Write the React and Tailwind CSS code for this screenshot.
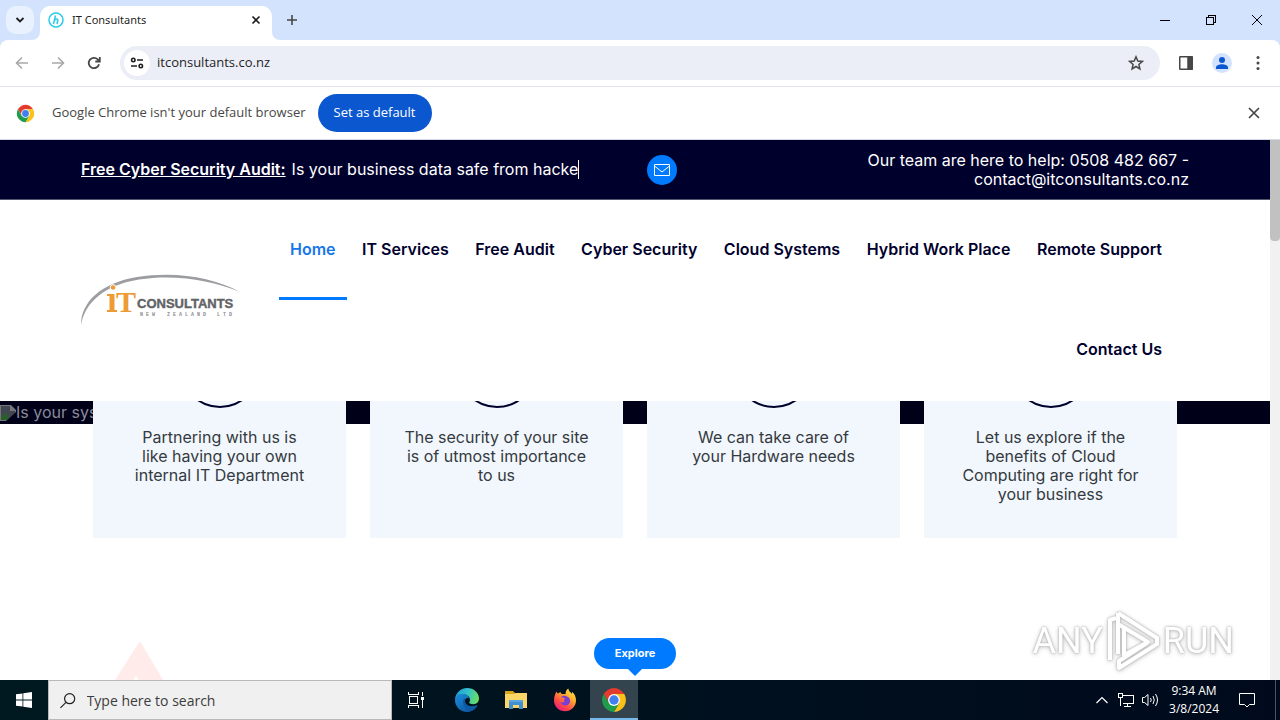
import React from "react";

const NAV = ["Home", "IT Services", "Free Audit", "Cyber Security", "Cloud Systems", "Hybrid Work Place", "Remote Support", "Contact Us"];

const CARDS = [
  ["Partnering with us is", "like having your own", "internal IT Department"],
  ["The security of your site", "is of utmost importance", "to us"],
  ["We can take care of", "your Hardware needs"],
  ["Let us explore if the", "benefits of Cloud", "Computing are right for", "your business"],
];

function ChromeLogo({ className }) {
  return (
    <svg viewBox="0 0 48 48" className={className} aria-hidden="true">
      <path fill="#e33b2e" d="M4.95 13A22 22 0 0 1 43.05 13H24L14.47 29.5Z" />
      <path fill="#fbc116" d="M43.05 13A22 22 0 0 1 24 46L33.53 29.5L24 13Z" />
      <path fill="#1f9d4c" d="M24 46A22 22 0 0 1 4.95 13L14.47 29.5H33.53Z" />
      <circle cx="24" cy="24" r="11" fill="#fff" />
      <circle cx="24" cy="24" r="8.6" fill="#3f7fee" />
    </svg>
  );
}

function EdgeLogo() {
  return (
    <svg viewBox="0 0 24 24" className="size-6" aria-hidden="true">
      <defs>
        <linearGradient id="edgeTop" x1="0" y1="0.4" x2="1" y2="0.6">
          <stop offset="0" stopColor="#1f9fd8" />
          <stop offset="0.5" stopColor="#35c1c9" />
          <stop offset="1" stopColor="#6be05a" />
        </linearGradient>
        <linearGradient id="edgeLow" x1="0" y1="0" x2="1" y2="1">
          <stop offset="0" stopColor="#1b8fdc" />
          <stop offset="1" stopColor="#0b4a94" />
        </linearGradient>
      </defs>
      <path fill="url(#edgeLow)" d="M0 12C0 7.500 4 6 7.500 6C11 6 14 8 14 10.500C11 9 9.500 12 10 14C11 18 17 19.500 22.300 17.200C20.500 21.300 16.500 24 12 24C5.500 24 0 19 0 12Z" />
      <path fill="#0c59a4" d="M8 13C7.500 18 12 22.500 17 22.800C19.500 21.700 21.500 19.500 22.300 17.200C17 19.500 11 18 10 14C9.700 12.500 10.200 11 11.500 10.200C9.500 10 8.200 11.500 8 13Z" />
      <path fill="url(#edgeTop)" d="M0 12C0.200 5 5.500 0 12 0C19 0 24 5 24 10.500C24 14 21.500 16.200 18.500 16.200C16 16.200 14.200 15.500 14.200 14.600C14.200 14 15 13.600 15 12C15 8.500 11.500 6 7.800 6C4 6 0.500 8 0 12Z" />
    </svg>
  );
}

function FolderLogo() {
  return (
    <svg viewBox="0 0 24 24" className="size-6" aria-hidden="true">
      <path fill="#d9a520" d="M1 3H9L11 5H22V9H1Z" />
      <path fill="#fbd566" d="M1 6H10L12 5H23V20H1Z" />
      <path fill="#3f8fd2" d="M5 13H19V21H15V17H9V21H5Z" />
      <path fill="#5aa5e0" d="M5 12H19V14H5Z" />
    </svg>
  );
}

function FirefoxLogo() {
  return (
    <svg viewBox="0 0 24 24" className="size-6" aria-hidden="true">
      <defs>
        <linearGradient id="foxFire" x1="0.9" y1="0" x2="0.2" y2="1">
          <stop offset="0" stopColor="#fff04a" />
          <stop offset="0.35" stopColor="#ffb02e" />
          <stop offset="0.7" stopColor="#ff4a45" />
          <stop offset="1" stopColor="#e31587" />
        </linearGradient>
      </defs>
      <path fill="url(#foxFire)" d="M3.500 3.500C4 4.800 4.600 5.300 5.300 5.600L7.500 3.800C7.500 5 8 5.600 9 6C10.500 5.800 11.500 5.800 12.500 6.300C12.500 3.500 13.500 1.700 15.300 0.500C15.500 3 17.500 4 18.800 5.700C19.200 5 19 4.500 18.900 3.800C21.700 6 23 9 23 12.500C23 18.700 18 23.200 12 23.200C5.800 23.200 1 18.500 1 12.700C1 9 2 6 3.500 3.500Z" />
      <path fill="#7a3fd0" d="M8 9.500C9 8 11 7.300 13.500 8.300C16.500 9.300 17.500 11.500 17 14C16.300 16.800 13.500 18 11 17.300C9 16.800 7.800 15.500 7.500 14C9 14.800 10.500 14.300 11.700 13.300C10.500 12.700 10.500 11.500 12.200 10.800C11.500 9.800 9.500 9.500 8 9.500Z" />
    </svg>
  );
}

function SiteLogo() {
  return (
    <svg viewBox="0 0 160 52" className="w-40 shrink-0" role="img" aria-label="IT Consultants New Zealand Ltd">
      <path fill="#9b9da0" d="M0 51C0 28 20 9 56 3C94 -3 132 3 159 18C130 6 94 0 58 5.500C24 11 4 28 0 51Z" />
      <circle cx="32" cy="13.500" r="2.800" fill="#ee9a35" stroke="#fff" />
      <g fill="#ee9a35">
        <rect x="28.500" y="20" width="5" height="17" />
        <rect x="26" y="20" width="5" height="2" />
        <rect x="26" y="36" width="10" height="2" />
      </g>
      <text x="35" y="38" fill="#ee9a35" fontFamily="Liberation Serif, serif" fontWeight="700" fontSize="30">T</text>
      <text x="56" y="34" fill="#626366" stroke="#626366" strokeWidth="0.400" fontFamily="Liberation Sans, sans-serif" fontWeight="700" fontSize="13">CONSULTANTS</text>
      <g fill="#8a8b8e" fontFamily="Liberation Mono, monospace" fontWeight="700" fontSize="5">
        <text x="59" y="42">N E W</text>
        <text x="86" y="42">Z E A L A N D</text>
        <text x="136" y="42">L T D</text>
      </g>
    </svg>
  );
}

function BrowserChrome() {
  return (
    <div className="shrink-0 font-['Noto_Sans',sans-serif] text-[#1f1f1f]">
      <div className="flex h-10 items-end bg-[#d3e3fd]">
        <button aria-label="Search tabs" className="mb-1.5 ml-1.5 flex size-7 items-center justify-center rounded-[10px] bg-[#e9f1fe]">
          <svg viewBox="0 0 10 10" className="size-2.5" fill="none" stroke="#1f1f1f" strokeWidth="1.800"><path d="M1.500 3L5 6.500L8.500 3" /></svg>
        </button>
        <svg viewBox="0 0 8 8" className="ml-[-2px] size-2 shrink-0" fill="#fff" aria-hidden="true"><path d="M8 0V8H0A8 8 0 0 0 8 0Z" /></svg>
        <div className="flex h-[34px] w-[232px] items-center rounded-t-[10px] bg-white px-2 pb-1.5">
          <svg viewBox="0 0 16 16" className="size-4" fill="none" stroke="#2bcbe8" aria-hidden="true">
            <circle cx="8" cy="8" r="7" strokeWidth="1.500" />
            <path d="M7.500 3.500L5.500 12M6.300 8.500C8 6.500 10.300 6.500 9.800 8.500L9 12" strokeWidth="1.500" />
          </svg>
          <span className="ml-2 flex-1 text-[11px]">IT Consultants</span>
          <button aria-label="Close tab" className="flex size-4 items-center justify-center">
            <svg viewBox="0 0 10 10" className="size-2.5" stroke="#1f1f1f" strokeWidth="1.600"><path d="M1.500 1.500L8.500 8.500M8.500 1.500L1.500 8.500" /></svg>
          </button>
        </div>
        <svg viewBox="0 0 8 8" className="size-2 shrink-0" fill="#fff" aria-hidden="true"><path d="M0 0V8H8A8 8 0 0 1 0 0Z" /></svg>
        <button aria-label="New tab" className="flex h-10 w-6 items-center justify-center">
          <svg viewBox="0 0 12 12" className="size-3" stroke="#474747" strokeWidth="1.600"><path d="M6 1V11M1 6H11" /></svg>
        </button>
        <div className="ml-auto flex h-10">
          <button aria-label="Minimize" className="flex w-[46px] items-center justify-center">
            <svg viewBox="0 0 10 10" className="size-2.5" stroke="#000" shapeRendering="crispEdges"><path d="M0 5.500H10" /></svg>
          </button>
          <button aria-label="Restore" className="flex w-[46px] items-center justify-center">
            <svg viewBox="0 0 10 10" className="size-2.5" fill="none" stroke="#000" shapeRendering="crispEdges"><path d="M0.500 2.500H7.500V9.500H0.500ZM2.500 2.500V0.500H9.500V7.500H7.500" /></svg>
          </button>
          <button aria-label="Close" className="flex w-[46px] items-center justify-center">
            <svg viewBox="0 0 10 10" className="size-2.5" stroke="#000"><path d="M0 0L10 10M10 0L0 10" /></svg>
          </button>
        </div>
      </div>

      <div className="bg-[#d3e3fd]">
        <div className="flex h-[47px] items-center rounded-t-lg border-b border-[#e0e3e8] bg-white px-1">
          <button aria-label="Back" className="flex size-9 items-center justify-center">
            <svg viewBox="0 0 14 14" className="size-3.5" fill="none" stroke="#a9a9a9" strokeWidth="1.600"><path d="M13 7H2M7 1.500L1.500 7L7 12.500" /></svg>
          </button>
          <button aria-label="Forward" className="flex size-9 items-center justify-center">
            <svg viewBox="0 0 14 14" className="size-3.5" fill="none" stroke="#a9a9a9" strokeWidth="1.600"><path d="M1 7H12M7 1.500L12.500 7L7 12.500" /></svg>
          </button>
          <button aria-label="Reload" className="flex size-9 items-center justify-center">
            <svg viewBox="0 0 14 14" className="size-3.5" fill="none" stroke="#474747" strokeWidth="1.800"><path d="M12 8.200A5.200 5.200 0 1 1 10.800 3.500L12.500 5.200M12.800 1V5.500H8.300" /></svg>
          </button>
          <div className="ml-2 flex h-[34px] flex-1 items-center rounded-full bg-[#eceef7] pl-1 pr-4">
            <button aria-label="View site information" className="flex size-[26px] items-center justify-center rounded-full bg-white">
              <svg viewBox="0 0 14 12" className="h-3 w-3.5" fill="none" stroke="#1f1f1f" strokeWidth="1.600"><circle cx="3.300" cy="3" r="1.700" /><path d="M7 3H13M1 9H7" /><circle cx="10.800" cy="9" r="1.700" /></svg>
            </button>
            <input aria-label="Address" defaultValue="itconsultants.co.nz" className="ml-[7px] flex-1 bg-transparent font-['Open_Sans','Noto_Sans',sans-serif] text-[13px] outline-none" />
            <button aria-label="Bookmark this tab">
              <svg viewBox="0 0 16 16" className="size-4" fill="none" stroke="#474747" strokeWidth="1.500"><path d="M8 1.800L9.800 6L14.300 6.400L10.900 9.400L11.900 13.900L8 11.500L4.100 13.900L5.100 9.400L1.700 6.400L6.200 6Z" /></svg>
            </button>
          </div>
          <button aria-label="Side panel" className="ml-2 flex size-9 items-center justify-center">
            <svg viewBox="0 0 14 14" className="size-3.5" fill="none" stroke="#474747" strokeWidth="1.500"><rect x="0.750" y="0.750" width="12.500" height="12.500" rx="0.500" /><path fill="#474747" d="M9 1H13V13H9Z" /></svg>
          </button>
          <button aria-label="Profile" className="flex size-9 items-center justify-center">
            <svg viewBox="0 0 20 20" className="size-5"><circle cx="10" cy="10" r="10" fill="#d3e3fd" /><g fill="#0b57d0"><circle cx="10" cy="7" r="3" /><path d="M4 16V14.500C4 12.300 7.500 11.300 10 11.300S16 12.300 16 14.500V16Z" /></g></svg>
          </button>
          <button aria-label="Menu" className="flex size-9 items-center justify-center">
            <svg viewBox="0 0 4 14" className="h-3.5 w-1" fill="#474747"><circle cx="2" cy="1.600" r="1.500" /><circle cx="2" cy="7" r="1.500" /><circle cx="2" cy="12.400" r="1.500" /></svg>
          </button>
        </div>
      </div>

      <div className="flex h-[53px] items-center border-b border-[#d5dae2] bg-white pl-4 pr-5 font-['Open_Sans','Noto_Sans',sans-serif]">
        <ChromeLogo className="size-[19px]" />
        <span className="ml-[17px] text-[13px] text-[#474747]">Google Chrome isn't your default browser</span>
        <button className="ml-3 h-[38px] w-[114px] rounded-full bg-[#0b57d0] text-[13px] text-white">Set as default</button>
        <button aria-label="Dismiss" className="ml-auto flex size-3 items-center justify-center">
          <svg viewBox="0 0 12 12" className="size-3" stroke="#474747" strokeWidth="1.700"><path d="M1 1L11 11M11 1L1 11" /></svg>
        </button>
      </div>
    </div>
  );
}

function Watermark() {
  return (
    <div aria-label="Any Run" className="absolute bottom-2 right-9 flex items-center font-['Roboto',sans-serif] text-[36px] leading-none text-white [filter:drop-shadow(0_0_1px_#aaa)_drop-shadow(0_1px_2px_#ccc)]">
      <span>ANY</span>
      <svg viewBox="0 0 56 62" className="mx-0.5 w-14" fill="none" stroke="#fff" strokeWidth="4" strokeLinejoin="round" aria-hidden="true">
        <path d="M5 50V10L11 8M13 3V44M13 3L52 28V34L14 58V51L42 33" />
        <path d="M13 14L43 32L19 45V16" />
      </svg>
      <span>RUN</span>
    </div>
  );
}

function Website() {
  return (
    <div className="flex min-h-0 flex-1 bg-[#f1f1f1]">
      <div className="relative flex flex-1 flex-col overflow-hidden bg-white font-['Inter','Noto_Sans',sans-serif] text-base leading-[19px]">
        <header className="relative z-10 bg-white">
          <div className="grid h-[60px] grid-cols-2 items-center border-b border-[#55556d] bg-[#00002d] px-[81px] text-white">
            <p className="flex items-center whitespace-nowrap">
              <a href="#audit" className="mr-1.5 font-semibold underline">Free Cyber Security Audit:</a>
              <span className="border-r border-white">Is your business data safe from hacke</span>
            </p>
            <div className="flex items-center justify-between pl-3">
              <a href="#mail" aria-label="Email" className="flex size-[30px] items-center justify-center rounded-full bg-[#007bff]">
                <svg viewBox="0 0 16 14" className="h-3.5 w-4" fill="none" stroke="#fff"><path d="M0.500 1.500H15.500V12.500H0.500ZM0.500 3L8 9L15.500 3" /></svg>
              </a>
              <p className="text-right">Our team are here to help: 0508 482 667 -<br />contact@itconsultants.co.nz</p>
            </div>
          </div>
          <div className="flex items-center pl-[81px] pr-[97px]">
            <SiteLogo />
            <nav className="ml-[38px] flex-1">
              <ul className="flex flex-wrap justify-between">
                {NAV.map((item, i) => (
                  <li key={item} className="last:ml-auto">
                    <a href="#top" className={i === 0
                      ? "flex h-[100px] items-center border-b-3 border-[#007bff] px-[11px] pt-px font-semibold text-[#1877e8]"
                      : "flex h-[100px] items-center px-[11px] pb-0.5 font-semibold text-[#00002d]"}>
                      {item}
                    </a>
                  </li>
                ))}
              </ul>
            </nav>
          </div>
          <div className="h-px bg-white" />
        </header>

        <section className="relative px-[93px]">
          <div className="absolute inset-x-0 top-0 flex h-[23px] items-center bg-[#000018] text-[#8b8b98]">
            <svg viewBox="0 0 16 16" className="size-4" aria-hidden="true">
              <path fill="#73777d" d="M0 0H11L16 5V16H0Z" />
              <path fill="#40474f" d="M1 1H10V6H15V8L7 15H1Z" />
              <path fill="#28602c" d="M1 15V12C3 8 7 8 9 12L7 15Z" />
              <path fill="#000018" d="M16 7V16H6Z" />
            </svg>
            <span>Is your system secure</span>
          </div>
          <div className="relative -mt-[97px] grid grid-cols-4 gap-6">
            {CARDS.map((lines) => (
              <article key={lines[0]} className="flex h-[234px] flex-col items-center bg-[#f2f7fd] pt-6 text-center text-[#343a40]">
                <div className="size-20 rounded-full border-2 border-[#00002d]" />
                <p className="mt-5">
                  {lines.map((line) => <span key={line} className="block">{line}</span>)}
                </p>
              </article>
            ))}
          </div>
        </section>

        <svg viewBox="0 0 48 39" className="ml-[115px] mt-auto w-12" aria-hidden="true">
          <path fill="#ffecea" d="M25 0L48 39H0Z" />
          <path fill="#fff" d="M21 35L24 39H18Z" />
        </svg>

        <div className="absolute inset-x-0 bottom-1 flex flex-col items-center">
          <button className="h-[31px] w-[82px] rounded-full bg-[#007bff] text-[11px] font-bold text-white">Explore</button>
          <svg viewBox="0 0 16 8" className="-mt-px h-2 w-4" fill="#007bff" aria-hidden="true"><path d="M0 0H16L8 8Z" /></svg>
        </div>
        <Watermark />
      </div>
      <div className="w-2.5">
        <div className="h-[101px] rounded-b-sm bg-[#c1c1c1]" />
      </div>
    </div>
  );
}

function Taskbar() {
  return (
    <footer className="flex h-10 shrink-0 bg-linear-to-r from-[#001820] to-[#000a1c] font-['Open_Sans','Noto_Sans',sans-serif] text-white">
      <button aria-label="Start" className="flex w-12 items-center justify-center">
        <svg viewBox="0 0 16 16" className="size-4" fill="#fff"><path d="M0 2.300L6.500 1.400V7.500H0ZM7.300 1.300L16 0V7.500H7.300ZM0 8.400H6.500V14.600L0 13.700ZM7.300 8.400H16V16L7.300 14.700Z" /></svg>
      </button>
      <label className="flex w-[344px] items-center border border-[#b9b9b9] bg-[#f0f0f0] pl-[11px]">
        <svg viewBox="0 0 17 17" className="size-[17px]" fill="none" stroke="#1f1f1f" strokeWidth="1.300" aria-hidden="true"><circle cx="10.500" cy="6.500" r="5.500" /><path d="M6.500 10.500L0.500 16.500" /></svg>
        <input aria-label="Search" placeholder="Type here to search" className="ml-[11px] w-full bg-transparent text-[14px] outline-none placeholder:text-[#3c3c3c]" />
      </label>
      <button aria-label="Task view" className="flex w-12 items-center justify-center">
        <svg viewBox="0 0 16 16" className="size-4" fill="none" stroke="#fff" shapeRendering="crispEdges"><path d="M0.500 0V2.500H10.500V0M0.500 16V13.500H10.500V16M1.500 4.500H9.500V11.500H1.500ZM14.500 0V4M14.500 8V16" /><path fill="#fff" stroke="none" d="M13 5H16V8H13Z" /></svg>
      </button>
      <div className="flex">
        <button aria-label="Edge" className="flex w-[49px] items-center justify-center pl-1"><EdgeLogo /></button>
        <button aria-label="File Explorer" className="flex w-[49px] items-center justify-center pl-1"><FolderLogo /></button>
        <button aria-label="Firefox" className="flex w-[49px] items-center justify-center pl-1"><FirefoxLogo /></button>
        <button aria-label="Chrome" className="ml-[3px] flex w-12 items-center justify-center border-b-2 border-[#76b9ed] bg-[#33444f] pt-0.5"><ChromeLogo className="size-[26px]" /></button>
      </div>
      <div className="ml-auto flex items-center text-[12px]">
        <svg viewBox="0 0 12 8" className="w-3" fill="none" stroke="#fff" strokeWidth="1.200" aria-hidden="true"><path d="M0.500 7L6 1.500L11.500 7" /></svg>
        <svg viewBox="0 0 16 14" className="ml-2.5 w-4" fill="none" stroke="#fff" shapeRendering="crispEdges" aria-hidden="true"><path d="M5 2.500H15.500V10.500H4.500M9.500 11V13M6 13.500H13M0.500 0.500H4.500V4.500H0.500ZM2.500 5V13" /></svg>
        <svg viewBox="0 0 17 14" className="ml-2 w-[17px]" fill="none" stroke="#fff" aria-hidden="true"><path d="M0.500 4.500H2.500L6 1.500V12.500L2.500 9.500H0.500ZM8.500 5Q10 7 8.500 9M11 3Q13.500 7 11 11M13.500 1Q17.500 7 13.500 13" /></svg>
        <div className="ml-2.5 mr-5 text-center leading-[18px]">9:34 AM<br />3/8/2024</div>
        <button aria-label="Notifications" className="mr-5">
          <svg viewBox="0 0 16 16" className="size-4" fill="none" stroke="#fff" aria-hidden="true"><path d="M0.500 1.500H15.500V12.500H10.500L8 15L5.500 12.500H0.500Z" /></svg>
        </button>
        <div className="mr-1 h-10 w-px bg-[#4a5666]" />
      </div>
    </footer>
  );
}

export default function App() {
  return (
    <div className="flex h-screen flex-col overflow-hidden bg-white">
      <BrowserChrome />
      <Website />
      <Taskbar />
    </div>
  );
}
